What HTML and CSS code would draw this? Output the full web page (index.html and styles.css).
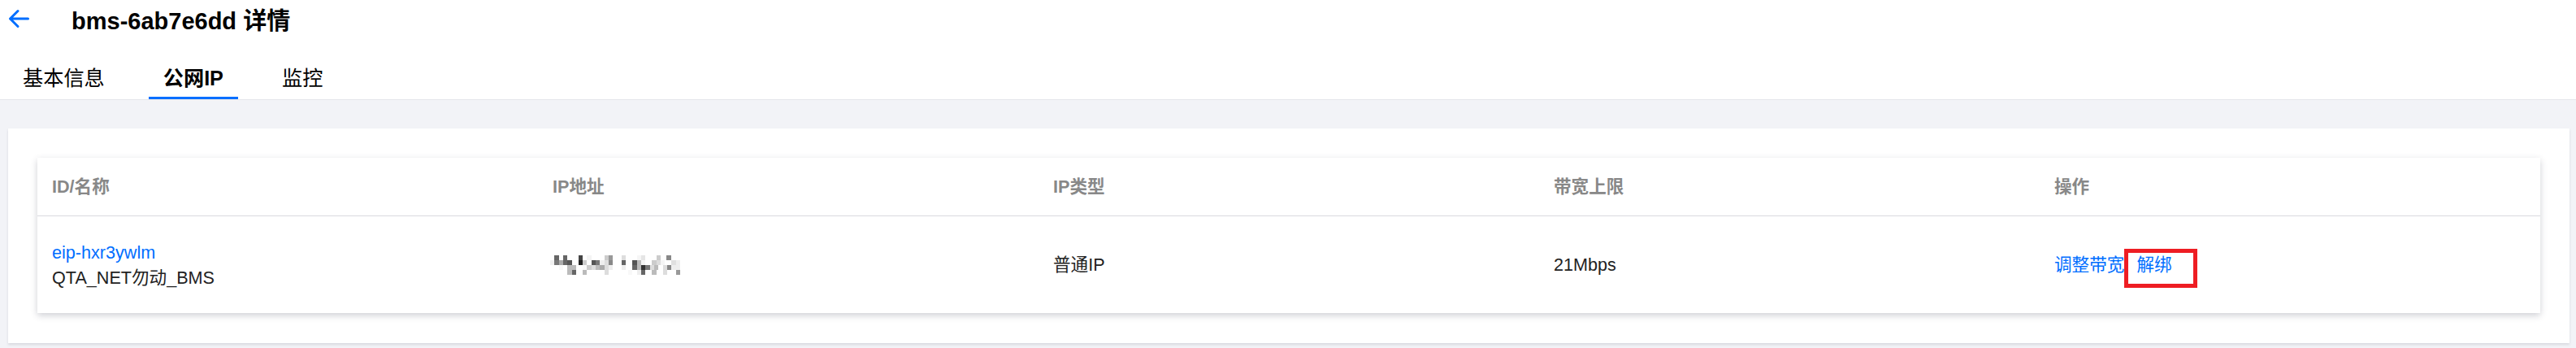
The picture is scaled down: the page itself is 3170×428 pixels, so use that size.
FILE: index.html
```html
<!DOCTYPE html>
<html lang="zh-CN">
<head>
    <meta charset="UTF-8">
    <title>bms-6ab7e6dd 详情</title>
    <link rel="stylesheet" href="styles.css">
</head>
<body>
    <div class="page_head">
        <svg class="back" viewBox="0 0 26 24" width="26" height="24">
            <path d="M24.5 12H2.5M12 2.5L2.5 12l9.5 9.5" fill="none" stroke="#006eff" stroke-width="3" stroke-linecap="round" stroke-linejoin="round"/>
        </svg>
        <div class="title">bms-6ab7e6dd 详情</div>
    </div>
    <div class="tabs">
        <div class="tab">基本信息</div>
        <div class="tab active">公网IP</div>
        <div class="tab">监控</div>
    </div>
    <div class="content">
        <div class="panel">
            <div class="card">
                <div class="row thead">
                    <div class="cell">ID/名称</div>
                    <div class="cell">IP地址</div>
                    <div class="cell">IP类型</div>
                    <div class="cell">带宽上限</div>
                    <div class="cell">操作</div>
                </div>
                <div class="row tbody">
                    <div class="cell">
                        <a class="link" href="#">eip-hxr3ywlm</a>
                        <div>QTA_NET勿动_BMS</div>
                    </div>
                    <div class="cell">
                        <svg class="mosaic" viewBox="0 0 480 71" width="160" height="24" preserveAspectRatio="none" shape-rendering="crispEdges">
                            <g>
                                <rect x="16" y="0" width="16" height="18" fill="#666"/>
                                <rect x="48" y="0" width="16" height="18" fill="#666"/>
                                <rect x="104" y="0" width="16" height="18" fill="#444"/>
                                <rect x="136" y="0" width="16" height="18" fill="#f4f4f4"/>
                                <rect x="200" y="0" width="16" height="18" fill="#ccc"/>
                                <rect x="216" y="0" width="16" height="18" fill="#999"/>
                                <rect x="264" y="0" width="16" height="18" fill="#ddd"/>
                                <rect x="320" y="0" width="16" height="18" fill="#f6f6f6"/>
                                <rect x="336" y="0" width="16" height="18" fill="#e5e5e5"/>
                                <rect x="392" y="0" width="16" height="18" fill="#ccc"/>
                                <rect x="430" y="0" width="16" height="18" fill="#888"/>
                            </g>
                            <g>
                                <rect x="0" y="17.5" width="16" height="18" fill="#f0f0f0"/>
                                <rect x="16" y="17.5" width="16" height="18" fill="#777"/>
                                <rect x="32" y="17.5" width="16" height="18" fill="#aaa"/>
                                <rect x="48" y="17.5" width="16" height="18" fill="#666"/>
                                <rect x="64" y="17.5" width="16" height="18" fill="#555"/>
                                <rect x="104" y="17.5" width="16" height="18" fill="#222"/>
                                <rect x="120" y="17.5" width="16" height="18" fill="#ccc"/>
                                <rect x="152" y="17.5" width="16" height="18" fill="#555"/>
                                <rect x="168" y="17.5" width="16" height="18" fill="#777"/>
                                <rect x="184" y="17.5" width="16" height="18" fill="#eee"/>
                                <rect x="200" y="17.5" width="16" height="18" fill="#ddd"/>
                                <rect x="216" y="17.5" width="16" height="18" fill="#888"/>
                                <rect x="264" y="17.5" width="16" height="18" fill="#666"/>
                                <rect x="304" y="17.5" width="16" height="18" fill="#555"/>
                                <rect x="320" y="17.5" width="16" height="18" fill="#bbb"/>
                                <rect x="336" y="17.5" width="16" height="18" fill="#f5f5f5"/>
                                <rect x="376" y="17.5" width="16" height="18" fill="#ccc"/>
                                <rect x="392" y="17.5" width="16" height="18" fill="#ddd"/>
                                <rect x="408" y="17.5" width="16" height="18" fill="#f5f5f5"/>
                                <rect x="448" y="17.5" width="16" height="18" fill="#e0e0e0"/>
                                <rect x="464" y="17.5" width="16" height="18" fill="#eee"/>
                            </g>
                            <g>
                                <rect x="32" y="35" width="16" height="18" fill="#f8f8f8"/>
                                <rect x="64" y="35" width="16" height="18" fill="#bbb"/>
                                <rect x="80" y="35" width="16" height="18" fill="#bbb"/>
                                <rect x="120" y="35" width="16" height="18" fill="#fafafa"/>
                                <rect x="136" y="35" width="16" height="18" fill="#ccc"/>
                                <rect x="152" y="35" width="16" height="18" fill="#ddd"/>
                                <rect x="168" y="35" width="16" height="18" fill="#bbb"/>
                                <rect x="184" y="35" width="16" height="18" fill="#aaa"/>
                                <rect x="200" y="35" width="16" height="18" fill="#ddd"/>
                                <rect x="216" y="35" width="16" height="18" fill="#eee"/>
                                <rect x="264" y="35" width="16" height="18" fill="#eee"/>
                                <rect x="304" y="35" width="16" height="18" fill="#666"/>
                                <rect x="320" y="35" width="16" height="18" fill="#bbb"/>
                                <rect x="336" y="35" width="16" height="18" fill="#333"/>
                                <rect x="352" y="35" width="16" height="18" fill="#777"/>
                                <rect x="368" y="35" width="16" height="18" fill="#ddd"/>
                                <rect x="384" y="35" width="16" height="18" fill="#bbb"/>
                                <rect x="416" y="35" width="16" height="18" fill="#ddd"/>
                                <rect x="432" y="35" width="16" height="18" fill="#888"/>
                                <rect x="448" y="35" width="16" height="18" fill="#eee"/>
                                <rect x="464" y="35" width="16" height="18" fill="#eee"/>
                            </g>
                            <g>
                                <rect x="64" y="53" width="16" height="18" fill="#bbb"/>
                                <rect x="80" y="53" width="16" height="18" fill="#666"/>
                                <rect x="120" y="53" width="16" height="18" fill="#bbb"/>
                                <rect x="200" y="53" width="16" height="18" fill="#ddd"/>
                                <rect x="288" y="53" width="16" height="18" fill="#f8f8f8"/>
                                <rect x="320" y="53" width="16" height="18" fill="#eee"/>
                                <rect x="336" y="53" width="16" height="18" fill="#666"/>
                                <rect x="376" y="53" width="16" height="18" fill="#bbb"/>
                                <rect x="416" y="53" width="16" height="18" fill="#ddd"/>
                                <rect x="464" y="53" width="16" height="18" fill="#999"/>
                            </g>
                        </svg>
                    </div>
                    <div class="cell">普通IP</div>
                    <div class="cell">21Mbps</div>
                    <div class="cell ops">
                        <a class="link" href="#">调整带宽</a><a class="link unbind" href="#">解绑<span class="mark"></span></a>
                    </div>
                </div>
            </div>
        </div>
    </div>
</body>
</html>
```

FILE: styles.css
```css
body {
    margin: 0;
    background-color: #ffffff;
    color: #000000;
    font-family: "Liberation Sans", "Noto Sans CJK SC", sans-serif;
}
.page_head {
    display: flex;
    align-items: center;
    height: 46px;
    padding-left: 10px;
}
.back {
    display: block;
    margin-right: 52px;
}
.title {
    font-size: 29px;
    font-weight: bold;
}
.tabs {
    display: flex;
    align-items: flex-end;
    height: 76px;
    padding-left: 10px;
}
.tab {
    padding: 0 18px;
    margin-right: 36px;
    font-size: 25.2px;
    line-height: 46px;
    border-bottom: 3px solid transparent;
}
.tab.active {
    font-weight: bold;
    border-bottom-color: #006eff;
}
.content {
    background-color: #f2f3f7;
    border-top: 1px solid #e5e6eb;
    padding: 35px 8px 6px 10px;
}
.panel {
    background-color: #ffffff;
    padding: 36px 36px 37px;
    box-shadow: 0 2px 3px rgba(54, 58, 80, 0.14);
}
.card {
    background-color: #ffffff;
    box-shadow: 0 3px 8px rgba(54, 58, 80, 0.24);
}
.row {
    display: grid;
    grid-template-columns: repeat(5, 1fr);
    align-items: center;
}
.thead {
    height: 71px;
    border-bottom: 1px solid #d9d9df;
    color: #888888;
    font-weight: bold;
}
.tbody {
    height: 119px;
    color: #222222;
}
.cell {
    padding: 0 18px;
    font-size: 21.6px;
    line-height: 31px;
}
.link {
    color: #006eff;
    text-decoration: none;
}
.mosaic {
    display: block;
    margin-left: -3px;
}
.ops .link + .link {
    margin-left: 15px;
}
.unbind {
    position: relative;
}
.mark {
    position: absolute;
    left: -15px;
    top: -7px;
    width: 90px;
    height: 48px;
    border: 5px solid #ee1d23;
    box-sizing: border-box;
}
```
